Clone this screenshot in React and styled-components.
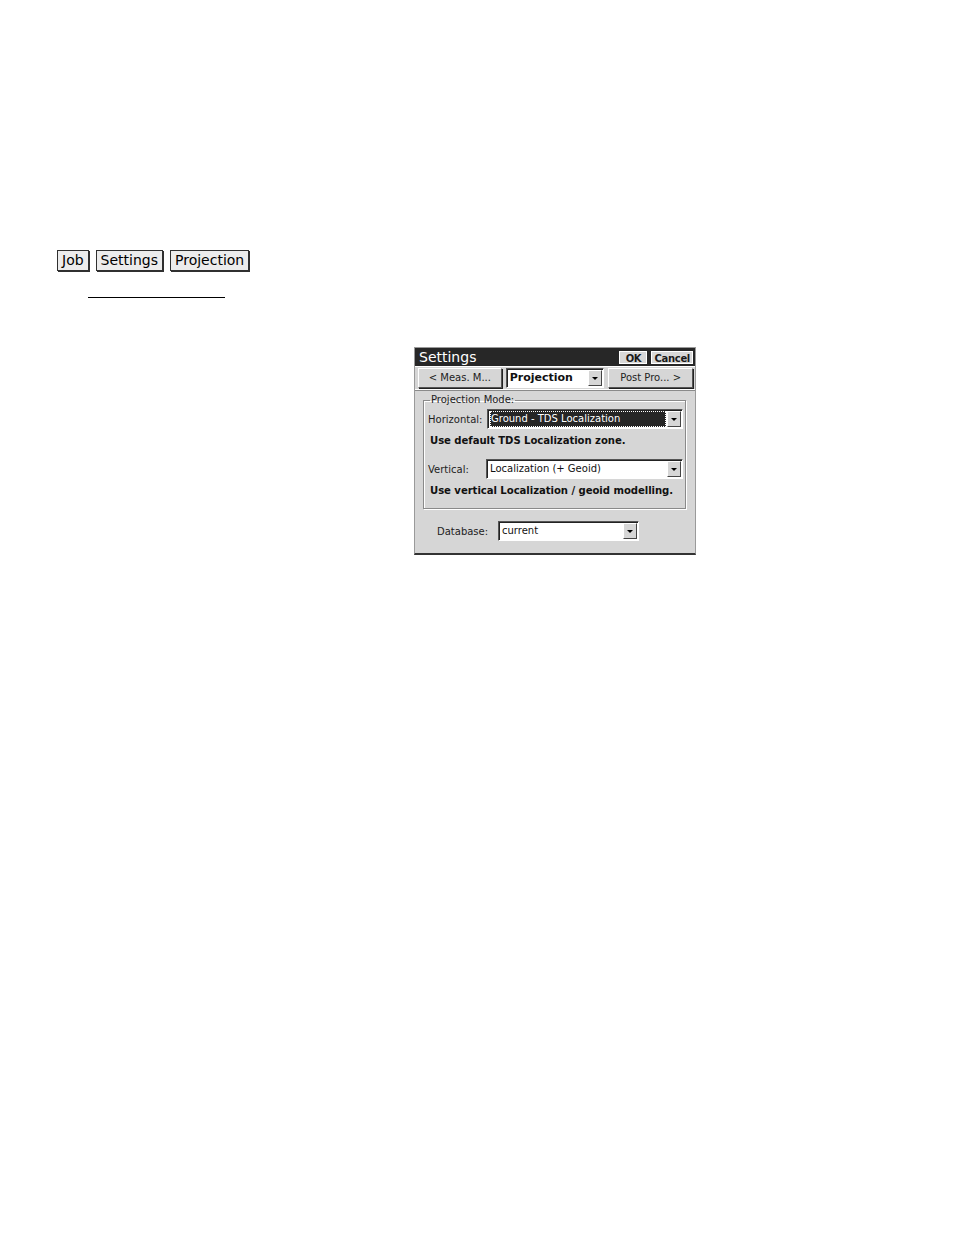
import React from 'react';
import styled, { createGlobalStyle } from 'styled-components';

const GlobalStyle = createGlobalStyle`
  html, body {
    margin: 0;
    padding: 0;
    background: #fff;
  }
  body {
    font-family: "DejaVu Sans", sans-serif;
    color: #000;
  }
`;

const Page = styled.div`
  width: 954px;
  height: 1235px;
  padding: 250px 0 0 57px;
  box-sizing: border-box;
`;

const Crumbs = styled.div`
  display: flex;
  gap: 7px;
`;

const Crumb = styled.div`
  height: 19px;
  line-height: 19px;
  padding: 0 4px;
  border: 1px solid #303030;
  background: #ececec;
  box-shadow: 1px 1px 0 #303030;
  font-family: "DejaVu Sans", sans-serif;
  font-size: 14px;
`;

const Rule = styled.div`
  margin: 26px 0 0 31px;
  width: 137px;
  border-top: 1px solid #000;
`;

const Dialog = styled.div`
  margin: 49px 0 0 357px;
  width: 282px;
  height: 208px;
  box-sizing: border-box;
  background: #d6d6d6;
  border: 1px solid #9a9a9a;
  border-bottom: 2px solid #333;
  font-family: "DejaVu Sans", sans-serif;
`;

const TitleBar = styled.div`
  display: flex;
  align-items: center;
  height: 18px;
  background: #272727;
  padding: 0 2px 0 4px;
  border-bottom: 1px solid #fff;
`;

const Title = styled.div`
  flex: 1;
  color: #fff;
  font-size: 14px;
  line-height: 18px;
`;

const TitleButton = styled.div`
  margin-left: 4px;
  height: 13px;
  line-height: 13px;
  padding: 0 2px;
  min-width: ${({ $w }) => $w}px;
  box-sizing: border-box;
  text-align: center;
  background: #d8d8d8;
  border: 1px solid #fff;
  font-size: 10px;
  font-weight: bold;
  color: #1a1a1a;
  letter-spacing: -0.3px;
`;

const TabRow = styled.div`
  display: flex;
  gap: 4px;
  padding: 1px 2px 0 3px;
  height: 21px;
  border-bottom: 1px solid #fff;
  box-shadow: 0 1px 0 #8a8a8a;
`;

const NavButton = styled.div`
  width: ${({ $w }) => $w}px;
  height: 20px;
  box-sizing: border-box;
  line-height: 18px;
  text-align: center;
  font-size: 10px;
  color: #222;
  background: #d6d6d6;
  border: 1px solid;
  border-color: #fff #555 #555 #fff;
  box-shadow: 1px 1px 0 #222;
`;

const Combo = styled.div`
  display: flex;
  width: ${({ $w }) => $w}px;
  height: 20px;
  box-sizing: border-box;
  background: #fff;
  border: 1px solid;
  border-color: #555 #fff #fff #555;
  box-shadow: inset 1px 1px 0 #222;
`;

const ComboText = styled.div`
  flex: 1;
  margin: 1px 1px 1px 2px;
  padding-left: 1px;
  font-size: ${({ $bold }) => ($bold ? '11px' : '10px')};
  font-weight: ${({ $bold }) => ($bold ? 'bold' : 'normal')};
  line-height: 16px;
  white-space: nowrap;
  overflow: hidden;
  color: ${({ $sel }) => ($sel ? '#fff' : '#111')};
  background: ${({ $sel }) => ($sel ? '#262626' : 'transparent')};
  outline: ${({ $sel }) => ($sel ? '1px dotted #fff' : 'none')};
  outline-offset: -1px;
`;

const Arrow = styled.div`
  width: 14px;
  margin: 1px 1px 1px 0;
  box-sizing: border-box;
  background: #d6d6d6;
  border: 1px solid;
  border-color: #fff #444 #444 #fff;
  display: flex;
  align-items: center;
  justify-content: center;
  &::after {
    content: '';
    border-left: 3px solid transparent;
    border-right: 3px solid transparent;
    border-top: 3px solid #000;
  }
`;

const Group = styled.fieldset`
  margin: 5px 10px 0 8px;
  padding: 0 2px 6px 4px;
  height: 114px;
  box-sizing: border-box;
  border: 1px solid #8a8a8a;
  box-shadow: 1px 1px 0 #fff, inset 1px 1px 0 #fff;
`;

const Legend = styled.legend`
  font-size: 10px;
  color: #222;
  padding: 0 1px;
  margin-left: 2px;
  line-height: 10px;
`;

const FieldRow = styled.div`
  display: flex;
  align-items: center;
  margin-top: ${({ $mt }) => $mt}px;
`;

const Label = styled.div`
  width: ${({ $w }) => $w}px;
  font-size: 10px;
  color: #222;
`;

const Note = styled.div`
  margin: ${({ $mt }) => $mt}px 0 0 2px;
  font-family: "DejaVu Sans", sans-serif;
  font-size: 10.1px;
  font-weight: bold;
  color: #111;
  letter-spacing: -0.05px;
`;

const DbRow = styled(FieldRow)`
  padding-left: 22px;
`;

const ComboBox = ({ width, text, bold, selected }) => (
  <Combo $w={width}>
    <ComboText $bold={bold} $sel={selected}>{text}</ComboText>
    <Arrow />
  </Combo>
);

export default function App() {
  return (
    <Page>
      <GlobalStyle />
      <Crumbs>
        <Crumb>Job</Crumb>
        <Crumb>Settings</Crumb>
        <Crumb>Projection</Crumb>
      </Crumbs>
      <Rule />
      <Dialog>
        <TitleBar>
          <Title>Settings</Title>
          <TitleButton $w={28}>OK</TitleButton>
          <TitleButton $w={41}>Cancel</TitleButton>
        </TitleBar>
        <TabRow>
          <NavButton $w={84}>&lt; Meas. M...</NavButton>
          <ComboBox width={99} text="Projection" bold />
          <NavButton $w={85}>Post Pro... &gt;</NavButton>
        </TabRow>
        <Group>
          <Legend>Projection Mode:</Legend>
          <FieldRow $mt={4}>
            <Label $w={59}>Horizontal:</Label>
            <ComboBox width={196} text="Ground - TDS Localization" selected />
          </FieldRow>
          <Note $mt={6}>Use default TDS Localization zone.</Note>
          <FieldRow $mt={13}>
            <Label $w={58}>Vertical:</Label>
            <ComboBox width={197} text="Localization (+ Geoid)" />
          </FieldRow>
          <Note $mt={6}>Use vertical Localization / geoid modelling.</Note>
        </Group>
        <DbRow $mt={12}>
          <Label $w={61}>Database:</Label>
          <ComboBox width={141} text="current" />
        </DbRow>
      </Dialog>
    </Page>
  );
}
